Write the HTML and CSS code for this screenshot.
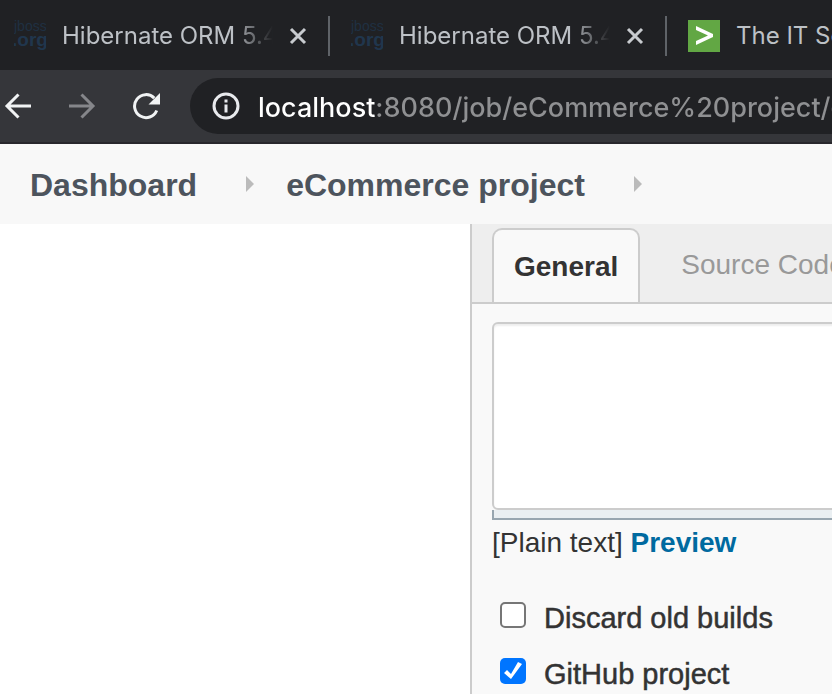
FILE: index.html
```html
<!DOCTYPE html>
<html lang="en">
<head>
<meta charset="utf-8">
<title>eCommerce project Config</title>
<link rel="stylesheet" href="styles.css">
</head>
<body>
<header class="browser">
  <div class="tab-strip">
    <div class="tab">
      <svg class="favicon" viewBox="0 0 32 32" aria-hidden="true"><text class="logo-top" x="0" y="11">jboss</text><text class="logo-bottom" x="-2" y="26">.org</text></svg>
      <span class="tab-title">Hibernate ORM 5.4.33</span>
      <button class="tab-close" aria-label="Close tab"><svg viewBox="0 0 18 18"><path d="M2 2l14 14M16 2L2 16"/></svg></button>
    </div>
    <div class="tab">
      <svg class="favicon" viewBox="0 0 32 32" aria-hidden="true"><text class="logo-top" x="0" y="11">jboss</text><text class="logo-bottom" x="-2" y="26">.org</text></svg>
      <span class="tab-title">Hibernate ORM 5.4.33</span>
      <button class="tab-close" aria-label="Close tab"><svg viewBox="0 0 18 18"><path d="M2 2l14 14M16 2L2 16"/></svg></button>
    </div>
    <div class="tab tab-last">
      <svg class="favicon" viewBox="0 0 32 32" aria-hidden="true"><path fill="#62a744" d="M0 0h32v32H0z"/><path fill="#fff" d="M8 6l17 8v3L8 25v-4l12-5.500L8 10z"/></svg>
      <span class="tab-title tab-title-open">The IT Solutions</span>
    </div>
  </div>
  <div class="toolbar">
    <button class="nav-button" aria-label="Back"><svg viewBox="0 0 28 28"><path d="M27 14H3M14.500 2.500L3 14l11.500 11.500"/></svg></button>
    <button class="nav-button nav-disabled" aria-label="Forward" disabled><svg viewBox="0 0 28 28"><path d="M1 14h24M13.500 2.500L25 14 13.500 25.500"/></svg></button>
    <button class="nav-button" aria-label="Reload"><svg viewBox="0 0 28 28"><path d="M24.700 18.500A11.500 11.500 0 1 1 22.300 6.100"/><path class="solid" d="M28 1v11.500H16.500z"/></svg></button>
    <div class="address">
      <svg class="info" viewBox="0 0 28 28" aria-hidden="true"><circle cx="14" cy="14" r="12"/><path d="M14 12.500v8M14 7.500v3"/></svg>
      <input class="url" aria-label="Address" value="localhost:8080/job/eCommerce%20project/configure">
    </div>
  </div>
</header>
<nav class="breadcrumbs" aria-label="Breadcrumb">
  <a href="#">Dashboard</a>
  <span class="arrow"></span>
  <a href="#">eCommerce project</a>
  <span class="arrow"></span>
</nav>
<main class="page">
  <aside class="side"></aside>
  <section class="config">
    <div class="config-tabs">
      <a class="config-tab active" href="#">General</a>
      <a class="config-tab" href="#">Source Code Management</a>
    </div>
    <form class="config-form">
      <div class="description">
        <textarea aria-label="Description"></textarea>
        <div class="resize-handle"></div>
      </div>
      <p class="format">[Plain text] <a href="#">Preview</a></p>
      <label class="option"><input type="checkbox">Discard old builds</label>
      <label class="option"><input type="checkbox" checked>GitHub project</label>
    </form>
  </section>
</main>
</body>
</html>
```
FILE: styles.css
```css
* { box-sizing: border-box; }

body {
  margin: 0;
  min-height: 100vh;
  display: flex;
  flex-direction: column;
  overflow: hidden;
  background: #fff;
  color: #333;
  font: 28px/36px "Liberation Sans", Arial, sans-serif;
}

a { color: inherit; text-decoration: none; }

button { border: 0; padding: 0; background: none; }

svg { display: block; }

.browser { font-family: Inter, sans-serif; }

.tab-strip {
  display: flex;
  height: 70px;
  padding: 2px 0 0 14px;
  overflow: hidden;
  background: #202124;
}

.tab {
  display: flex;
  flex: none;
  align-items: center;
  width: 337px;
  color: #bdc1c6;
}

.tab:not(.tab-last)::after {
  content: "";
  width: 2px;
  height: 40px;
  margin-left: 21px;
  background: #5f6368;
}

.favicon { flex: none; width: 32px; height: 32px; margin-right: 16px; }

.logo-top { font: 14px "Liberation Sans", sans-serif; fill: #1f3042; }
.logo-bottom { font: bold 19px "Liberation Sans", sans-serif; fill: #20364d; }

.tab-title {
  width: 211px;
  overflow: hidden;
  white-space: nowrap;
  font-size: 24px;
  line-height: 32px;
  mask-image: linear-gradient(to right, #000 170px, transparent);
}

.tab-title-open { width: auto; overflow: visible; mask-image: none; }

.tab-close { width: 18px; height: 18px; margin-left: 16px; }
.tab-close path { fill: none; stroke: #c8cbcf; stroke-width: 3; }

.toolbar {
  display: flex;
  align-items: center;
  height: 74px;
  padding: 6px 0 6px 4px;
  border-bottom: 2px solid #28272c;
  background: #35363a;
}

.nav-button { flex: none; width: 28px; height: 28px; margin-right: 36px; }
.nav-button path { fill: none; stroke: #f1f3f4; stroke-width: 3; }
.nav-button .solid { fill: #f1f3f4; stroke: none; }
.nav-disabled path { stroke: #85868a; }

.address {
  display: flex;
  flex: 1;
  align-items: center;
  min-width: 0;
  height: 56px;
  margin-left: -6px;
  padding-left: 22px;
  border-radius: 28px 0 0 28px;
  background: #202124;
}

.info { flex: none; width: 28px; height: 28px; margin-right: 18px; }
.info * { fill: none; stroke: #e8eaed; stroke-width: 3; }

.url {
  flex: 1;
  min-width: 0;
  height: 40px;
  border: 0;
  padding: 2px 0 0;
  outline: 0;
  background: linear-gradient(to right, #fff 118px, #8f9092 118px);
  background-clip: text;
  -webkit-text-fill-color: transparent;
  font: 500 27px/38px Inter, sans-serif;
}

.breadcrumbs {
  display: flex;
  align-items: center;
  height: 80px;
  padding: 0 0 0 30px;
  background: #f8f8f8;
  color: #4d545d;
  font-size: 32px;
  line-height: 38px;
  font-weight: bold;
}

.breadcrumbs a { padding-top: 2px; }

.arrow {
  margin: 0 32px 0 49px;
  border: solid transparent;
  border-width: 8px 0 8px 8px;
  border-left-color: #bbb;
}

.page { display: flex; flex: 1; }

.side { flex: 0 0 470px; }

.config {
  flex: 1;
  min-width: 0;
  overflow: hidden;
  border-left: 2px solid #ccc;
  background: #f9f9f9;
}

.config-tabs {
  display: flex;
  height: 80px;
  padding: 4px 0 0 20px;
  border-bottom: 2px solid #ccc;
  background: #eee;
  white-space: nowrap;
}

.config-tab {
  padding: 19px 20px;
  border: 2px solid transparent;
  border-bottom: 0;
  color: #999;
  line-height: 32px;
}

.config-tab.active {
  margin-right: 19px;
  padding-top: 21px;
  border-color: #ccc;
  border-radius: 10px 10px 0 0;
  background: #f9f9f9;
  color: #333;
  font-weight: bold;
}

.config-form { padding: 18px 0 0 20px; }

.description { margin-right: -8px; }

.description textarea {
  display: block;
  width: 100%;
  height: 188px;
  padding: 8px;
  border: 2px solid #ccc;
  border-radius: 6px;
  outline: 0;
  resize: none;
  background: #fff;
  box-shadow: inset 0 2px 2px #eee;
}

.resize-handle {
  height: 10px;
  border: solid #98a6b0;
  border-width: 0 0 2px 2px;
  background: #eaeff2;
}

.format { margin: 5px 0 29px; }
.format a { color: #006aa0; font-weight: bold; }

.option {
  display: flex;
  align-items: center;
  height: 56px;
  padding-left: 8px;
  font-size: 29px;
  -webkit-text-stroke: 0.5px #333;
}

.option input {
  appearance: none;
  width: 26px;
  height: 26px;
  margin: 0 18px 6px 0;
  border: 2px solid #767676;
  border-radius: 5px;
  background: #fff;
}

.option input:checked {
  border: 0;
  background: #0075ff;
}

.option input:checked::before {
  content: "";
  display: block;
  width: 26px;
  height: 26px;
  background: #fff;
  clip-path: polygon(4px 15px, 7px 12px, 11px 16px, 18px 4px, 22px 6px, 11px 21px);
}
```
